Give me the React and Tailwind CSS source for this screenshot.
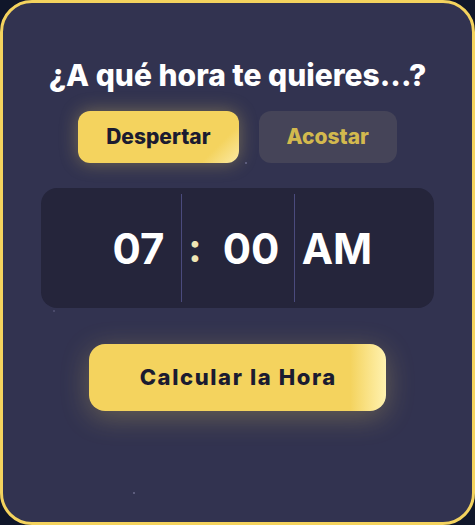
import { useState } from "react";

const App = () => {
  const [mode, setMode] = useState("despertar");
  const [hour] = useState("07");
  const [minute] = useState("00");
  const [period] = useState("AM");

  return (
    <div className="min-h-screen bg-[#10162a] font-['Inter',sans-serif]">
      <div className="relative flex h-[525px] w-[475px] flex-col items-center rounded-[32px] border-[3px] border-[#f4d35e] bg-[#323350] pt-[55px]">
        {/* little stars */}
        <span className="absolute left-[130px] top-[489px] h-[2px] w-[2px] bg-[#5c5c7c]" />
        <span className="absolute left-[242px] top-[159px] h-[2px] w-[2px] bg-[#5c5c7c]" />
        <span className="absolute left-[50px] top-[307px] h-[2px] w-[2px] bg-[#4a4a6a]" />

        <h1 className="text-[30px] font-extrabold leading-[34px] text-white">
          ¿A qué hora te quieres...?
        </h1>

        <div className="mt-[19px] flex gap-5">
          <button
            onClick={() => setMode("despertar")}
            className={
              mode === "despertar"
                ? "rounded-xl bg-[linear-gradient(135deg,#f4d35e_82%,#fbeaa4)] px-7 py-3 text-[21px] font-extrabold leading-7 text-[#1b1b30] shadow-[0_0_18px_rgba(244,211,94,0.35)]"
                : "rounded-xl bg-[#454458] px-7 py-3 text-[21px] font-extrabold leading-7 text-[#d3b94e]"
            }
          >
            Despertar
          </button>
          <button
            onClick={() => setMode("acostar")}
            className={
              mode === "acostar"
                ? "rounded-xl bg-[linear-gradient(135deg,#f4d35e_82%,#fbeaa4)] px-7 py-3 text-[21px] font-extrabold leading-7 text-[#1b1b30] shadow-[0_0_18px_rgba(244,211,94,0.35)]"
                : "rounded-xl bg-[#454458] px-7 py-3 text-[21px] font-extrabold leading-7 text-[#d3b94e]"
            }
          >
            Acostar
          </button>
        </div>

        <div className="mt-[25px] flex h-[120px] w-[393px] justify-center rounded-2xl bg-[#25253b] py-1.5">
          <div className="flex w-[85px] items-center justify-center text-[42px] font-bold text-white">
            {hour}
          </div>
          <div className="w-px bg-[#4b4b7d]" />
          <div className="flex w-[26px] items-center justify-center text-[40px] font-bold text-[#efe5b5]">
            :
          </div>
          <div className="flex w-[86px] items-center justify-center text-[42px] font-bold text-white">
            {minute}
          </div>
          <div className="w-px bg-[#4b4b7d]" />
          <div className="flex w-[84px] items-center justify-center text-[42px] font-bold text-white">
            {period}
          </div>
        </div>

        <button className="mt-9 h-[67px] w-[297px] rounded-2xl bg-[linear-gradient(90deg,#f4d35e_88%,#fff2b0)] pl-[1.6px] text-[22px] font-extrabold tracking-[1.6px] text-[#1b1b30] shadow-[0_6px_28px_rgba(244,211,94,0.28)]">
          Calcular la Hora
        </button>
      </div>
    </div>
  );
};

export default App;
